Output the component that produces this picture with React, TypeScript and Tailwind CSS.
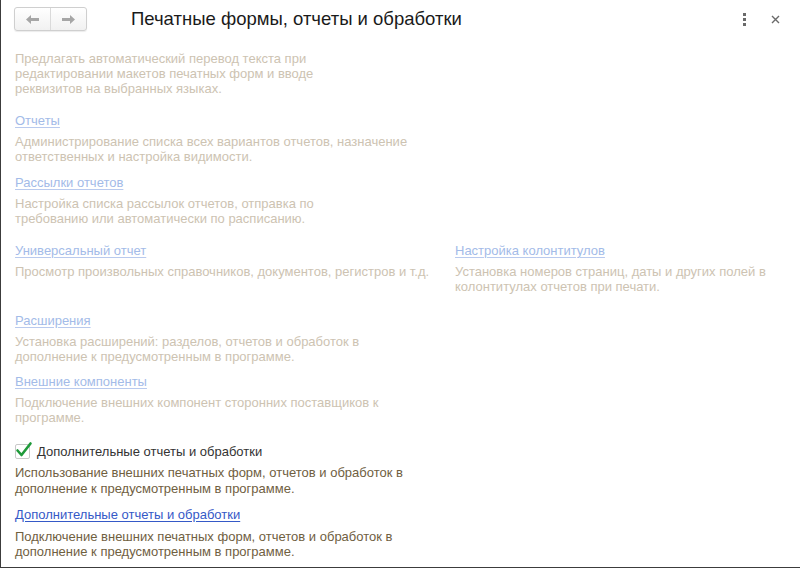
import React from "react";

const font = { fontFamily: '"Liberation Sans", Arial, sans-serif' };

function Item({
  title,
  desc,
  className = "",
}: {
  title: string;
  desc: string[];
  className?: string;
}) {
  return (
    <div className={className}>
      <div className="h-[16px] leading-[16px] text-[13px]">
        <span className="text-[#a3bbe8] underline decoration-[#b9caee] underline-offset-[2px]">
          {title}
        </span>
      </div>
      <div className="mt-[5px] text-[13px] leading-[15px] text-[#cdc3b2]">
        {desc.map((d, i) => (
          <div key={i}>{d}</div>
        ))}
      </div>
    </div>
  );
}

export default function App() {
  return (
    <div
      className="w-[800px] h-[569px] bg-white overflow-hidden"
      style={font}
    >
      <div className="h-[568px] border-l border-b border-[#3c3c3c] flex flex-col">
        {/* Header */}
        <div className="h-[40px] flex items-center pl-[13px] pr-[20px] shrink-0">
          <div className="flex h-[24px] w-[73px] rounded-[3px] border border-[#cfcfcf] bg-gradient-to-b from-white to-[#f1f1f1] shadow-[0_1px_1px_rgba(0,0,0,0.08)] mt-[-2px]">
            <div className="flex-1 flex items-center justify-center border-r border-[#dadada]">
              <svg width="15" height="11" viewBox="0 0 15 11">
                <path d="M1 5.5 L6 1 L6 4 L14 4 L14 7 L6 7 L6 10 Z" fill="#a6a6a6" />
              </svg>
            </div>
            <div className="flex-1 flex items-center justify-center">
              <svg width="15" height="11" viewBox="0 0 15 11">
                <path d="M14 5.5 L9 1 L9 4 L1 4 L1 7 L9 7 L9 10 Z" fill="#a6a6a6" />
              </svg>
            </div>
          </div>
          <div className="ml-[44px] text-[18.5px] text-[#1a1a1a] leading-[22px] mt-[-2px]">
            Печатные формы, отчеты и обработки
          </div>
          <div className="flex-1" />
          <div className="flex flex-col gap-[2px] items-center mr-[25px] mt-[-2px]">
            <div className="w-[3px] h-[3px] bg-[#6a6a6a]" />
            <div className="w-[3px] h-[3px] bg-[#6a6a6a]" />
            <div className="w-[3px] h-[3px] bg-[#6a6a6a]" />
          </div>
          <svg width="9" height="9" viewBox="0 0 9 9" className="mt-[-2px]">
            <path d="M1 1 L8 8 M8 1 L1 8" stroke="#6a6a6a" strokeWidth="1.4" />
          </svg>
        </div>

        {/* Content */}
        <div className="px-[14px] pt-[11px] text-[13px]">
          <div className="leading-[15px] text-[#cdc3b2]">
            <div>Предлагать автоматический перевод текста при</div>
            <div>редактировании макетов печатных форм и вводе</div>
            <div>реквизитов на выбранных языках.</div>
          </div>

          <Item
            className="mt-[17px]"
            title="Отчеты"
            desc={[
              "Администрирование списка всех вариантов отчетов, назначение",
              "ответственных и настройка видимости.",
            ]}
          />
          <Item
            className="mt-[11px]"
            title="Рассылки отчетов"
            desc={[
              "Настройка списка рассылок отчетов, отправка по",
              "требованию или автоматически по расписанию.",
            ]}
          />

          <div className="mt-[17px] grid grid-cols-[440px_1fr]">
            <Item
              title="Универсальный отчет"
              desc={[
                "Просмотр произвольных справочников, документов, регистров и т.д.",
              ]}
            />
            <Item
              title="Настройка колонтитулов"
              desc={[
                "Установка номеров страниц, даты и других полей в",
                "колонтитулах отчетов при печати.",
              ]}
            />
          </div>

          <Item
            className="mt-[19px]"
            title="Расширения"
            desc={[
              "Установка расширений: разделов, отчетов и обработок в",
              "дополнение к предусмотренным в программе.",
            ]}
          />
          <Item
            className="mt-[10px]"
            title="Внешние компоненты"
            desc={[
              "Подключение внешних компонент сторонних поставщиков к",
              "программе.",
            ]}
          />

          {/* Checkbox */}
          <div className="mt-[18px] flex items-center h-[17px]">
            <div className="relative w-[15px] h-[15px] border border-[#c9c9c9] rounded-[2px] bg-white">
              <svg
                className="absolute left-[-1px] top-[-4px]"
                width="18"
                height="18"
                viewBox="0 0 18 18"
              >
                <path
                  d="M2.5 9.5 L6.5 14 L15.5 2.5"
                  fill="none"
                  stroke="#1f9a3a"
                  strokeWidth="2.6"
                  strokeLinecap="round"
                  strokeLinejoin="round"
                />
              </svg>
            </div>
            <span className="ml-[7px] text-[#333333] leading-[16px]">
              Дополнительные отчеты и обработки
            </span>
          </div>
          <div className="mt-[5px] leading-[16px] text-[#70603f]">
            <div>Использование внешних печатных форм, отчетов и обработок в</div>
            <div>дополнение к предусмотренным в программе.</div>
          </div>

          <div className="mt-[10px] h-[16px] leading-[16px]">
            <span className="text-[#3559c7] underline decoration-[#3559c7] underline-offset-[2px]">
              Дополнительные отчеты и обработки
            </span>
          </div>
          <div className="mt-[6px] leading-[15px] text-[#70603f]">
            <div>Подключение внешних печатных форм, отчетов и обработок в</div>
            <div>дополнение к предусмотренным в программе.</div>
          </div>
        </div>
      </div>
    </div>
  );
}
